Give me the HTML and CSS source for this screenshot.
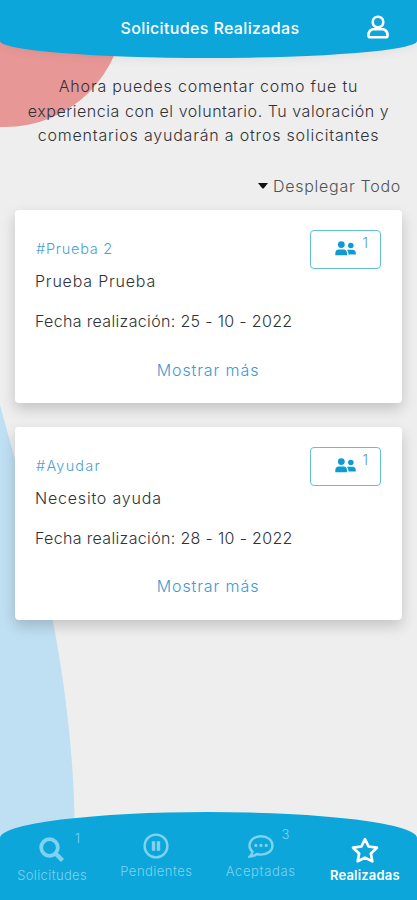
FILE: index.html
```html
<!DOCTYPE html>
<html lang="es">
<head>
<meta charset="utf-8">
<meta name="viewport" content="width=device-width, initial-scale=1">
<title>Solicitudes Realizadas</title>
<link rel="stylesheet" href="styles.css">
</head>
<body>
<svg width="0" height="0" class="defs" aria-hidden="true">
  <symbol id="users" viewBox="0 0 21 15">
    <circle cx="6.3" cy="3.6" r="3.4"/><circle cx="15.8" cy="4.5" r="2.8"/>
    <path d="M0.3 14.2V12.4Q0.3 8.6 4 8.6H8.6Q12 8.6 12 12.4V14.2ZM11.8 8.7H17.5Q20.8 8.8 20.8 12.3V13.4H13.4V12.2Q13.3 9.9 11.8 8.7Z"/>
  </symbol>
</svg>
<div class="screen">
  <svg class="backdrop" viewBox="0 0 417 900" aria-hidden="true">
    <circle class="backdrop-pink" cx="5" cy="8" r="119"/>
    <path class="backdrop-blue" d="M0 405C26 500 72 655 74.5 820V900H0Z"/>
  </svg>
  <header class="header">
    <h1 class="title">Solicitudes Realizadas</h1>
    <svg class="profile" viewBox="0 0 22 24"><circle cx="11" cy="7" r="5.3"/><path d="M5.6 14.2H16.4Q20.5 15.5 20.5 20V20.8Q20.5 22.3 19 22.3H3Q1.5 22.3 1.5 20.8V20Q1.5 15.5 5.6 14.2Z"/></svg>
  </header>
  <main class="main">
    <p class="intro"><span class="l1">Ahora puedes comentar como fue tu</span><br><span class="l2">experiencia con el voluntario. Tu valoración y</span><br><span class="l3">comentarios ayudarán a otros solicitantes</span></p>
    <div class="expand"><svg class="caret" viewBox="0 0 12 8"><path d="M1 1H11L6.8 6.2Q6 7 5.2 6.2Z"/></svg><span>Desplegar Todo</span></div>
    <article class="card">
      <div class="card-top"><span class="tag">#Prueba 2</span><button class="people"><svg class="users"><use href="#users"/></svg><span class="count">1</span></button></div>
      <p class="name">Prueba Prueba</p>
      <p class="date">Fecha realización: 25 - 10 - 2022</p>
      <a class="more">Mostrar más</a>
    </article>
    <article class="card">
      <div class="card-top"><span class="tag tag-wide">#Ayudar</span><button class="people"><svg class="users"><use href="#users"/></svg><span class="count">1</span></button></div>
      <p class="name">Necesito ayuda</p>
      <p class="date">Fecha realización: 28 - 10 - 2022</p>
      <a class="more">Mostrar más</a>
    </article>
  </main>
  <nav class="nav">
    <a class="tab tab-low"><svg class="icon" viewBox="0 0 26 26"><circle cx="10.5" cy="10.5" r="8.3" stroke-width="3.8"/><path d="M17 17L23.5 23.5" stroke-width="4.4"/></svg><span class="label solicitudes">Solicitudes</span><span class="badge">1</span></a>
    <a class="tab"><svg class="icon" viewBox="0 0 26 26"><circle cx="13" cy="13" r="11.4" stroke-width="2.4"/><path d="M10.5 8.2V17.8M15.5 8.2V17.8" stroke-width="3.4"/></svg><span class="label pendientes">Pendientes</span></a>
    <a class="tab"><svg class="icon" viewBox="0 0 26 26"><path d="M13 3.2C19.5 3.2 24.5 7.2 24.5 12.4S19.5 21.6 13 21.6Q10.7 21.6 8.8 21Q5.8 23.5 1.8 23.5Q4 21.3 4.5 18.7Q1.5 16.2 1.5 12.4C1.5 7.2 6.5 3.2 13 3.2Z" stroke-width="2.4"/><path d="M7.8 12.4H7.81M13 12.4H13.01M18.2 12.4H18.21" stroke-width="3.2" stroke-linecap="round"/></svg><span class="label aceptadas">Aceptadas</span><span class="badge badge-high">3</span></a>
    <a class="tab tab-low active"><svg class="icon star" viewBox="0 0 28 26"><path d="M14 2.2L17.6 9.5L25.9 10.7L19.9 16.4L21.3 24.4L14 20.6L6.7 24.4L8.1 16.4L2.1 10.7L10.4 9.5Z" stroke-width="2.7" stroke-linejoin="round"/></svg><span class="label realizadas">Realizadas</span></a>
  </nav>
</div>
</body>
</html>
```
FILE: styles.css
```css
* { box-sizing: border-box; }
body { margin: 0; font-family: Inter, "Open Sans", sans-serif; font-weight: 300; font-size: 16px; color: #303238; }
p, h1 { margin: 0; }
.defs { position: absolute; }
.screen { position: relative; isolation: isolate; display: flex; flex-direction: column; width: 417px; height: 900px; overflow: hidden; background: #eee; }
.backdrop { position: absolute; inset: 0; z-index: -1; width: 417px; height: 900px; }
.backdrop-pink { fill: #e89797; }
.backdrop-blue { fill: #bfdff2; }
.header { display: grid; grid-template-columns: 78px 1fr 78px; align-items: center; justify-items: center; height: 58px; flex: none; background: #0ca6da; border-radius: 0 0 50% 50% / 0 0 17px 17px; box-shadow: 0 1px 12px rgba(0,0,0,.07); }
.title { grid-column: 2; margin-top: -2px; padding-left: 3px; font-size: 16px; font-weight: 500; line-height: 24px; letter-spacing: .36px; color: #fff; white-space: nowrap; }
.profile { width: 22px; height: 24px; margin-top: -4px; fill: none; stroke: #fff; stroke-width: 2.6; }
.main { flex: 1; padding: 16px 15px 0; }
.intro { text-align: center; line-height: 24.5px; white-space: nowrap; }
.l1, .l3 { letter-spacing: .8px; }
.l2 { letter-spacing: .55px; }
.expand { display: flex; justify-content: flex-end; align-items: center; gap: 4px; height: 24px; margin-top: 26px; padding-right: 1px; letter-spacing: .72px; color: #505258; white-space: nowrap; }
.caret { width: 12px; height: 8px; fill: #111; }
.card { display: flex; flex-direction: column; height: 193px; margin-top: 12px; padding: 20px 21px 0 20px; background: #fff; border-radius: 4px; box-shadow: 0 6px 14px rgba(0,0,0,.18); }
.card + .card { margin-top: 24px; }
.card-top { display: flex; justify-content: space-between; align-items: center; height: 39px; }
.tag { margin-top: -2px; padding-left: 1px; font-size: 14.5px; letter-spacing: .75px; color: #4d9fd4; }
.tag-wide { letter-spacing: 1.2px; }
.people { position: relative; width: 71px; height: 39px; padding: 0; border: 1px solid #62bddf; border-radius: 4px; background: #fff; color: #5698cf; font: inherit; }
.users { display: block; width: 21px; height: 15px; margin: -1px auto 0; fill: #0c9bd3; }
.count { position: absolute; top: 4px; right: 12px; font-size: 14px; line-height: 16px; }
.name, .date { line-height: 24px; white-space: nowrap; }
.name { letter-spacing: .8px; }
.date { margin-top: 16px; letter-spacing: .34px; }
.more { align-self: center; margin-top: 25px; line-height: 24px; letter-spacing: .9px; color: #3d99d2; }
.card + .card .more { margin-top: 24px; }
.nav { display: flex; flex: none; height: 88px; background: #0ca6da; border-radius: 50% 50% 0 0 / 26px 26px 0 0; }
.tab { position: relative; display: flex; flex: 0 0 104.25px; flex-direction: column; align-items: center; padding-top: 21px; color: #7fd2f0; }
.tab-low { padding-top: 25px; }
.icon { width: 26px; height: 26px; fill: none; stroke: currentColor; }
.star { width: 28px; }
.label { font-size: 13px; line-height: 18px; margin-top: 3px; white-space: nowrap; }
.solicitudes { letter-spacing: .36px; }
.pendientes { letter-spacing: .48px; }
.aceptadas { letter-spacing: .65px; }
.badge { position: absolute; top: 18px; left: 75px; font-size: 13px; line-height: 16px; }
.badge-high { top: 14px; left: 73px; }
.active { color: #fff; }
.active .label { font-weight: 600; letter-spacing: .2px; }
```
